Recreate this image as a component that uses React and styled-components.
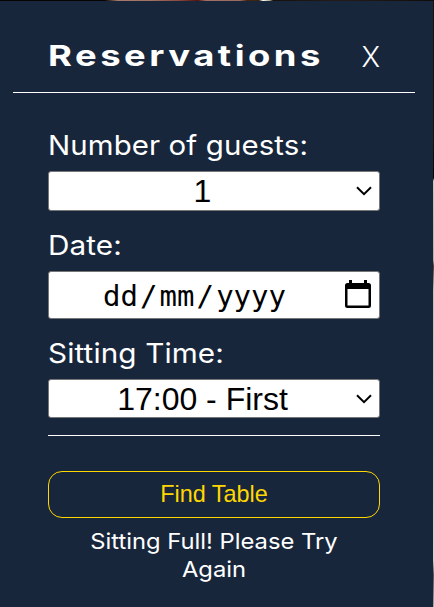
import React from "react";
import styled, { createGlobalStyle } from "styled-components";

const GlobalStyle = createGlobalStyle`
  * { box-sizing: border-box; }
  body { margin: 0; background: #0c0808; overflow: hidden; }
`;

const Backdrop = styled.main`
  width: 434px;
  height: 607px;
  padding: 1px 1px 0 0;
  background:
    linear-gradient(90deg, #080303 0 105px, #a8796a 118px, #a17365 150px, #8c4a40 178px, #54120f 198px, #a46f66 206px, #9a6b5e 240px, #472411 247px, #38240c 259px, #f4fff8 263px, #a99d89 270px, #15100e 273px, #241c1b 340px, #100b0b 434px) top / 434px 1px no-repeat,
    linear-gradient(180deg, #1b1110 0 140px, #080303 178px, #c8c4c2 181px, #b8b0ac 260px, #4e3c36 266px, #c4bfbd 290px, #d4d2d1 560px, #59545b 575px, #aaa7aa 607px) right / 1px 607px no-repeat;
`;

const Panel = styled.section`
  height: 606px;
  background: #18263c;
  color: #fff;
  font-family: Inter, sans-serif;
`;

const Header = styled.header`
  display: flex;
  justify-content: space-between;
  height: 92px;
  margin: 0 18px 0 13px;
  padding: 0 35px 0 36px;
  border-bottom: 1px solid #fff;
`;

const Title = styled.h1`
  margin: 0 0 0 -1px;
  padding-top: 35px;
  font: 700 29px/40px Inter, sans-serif;
  letter-spacing: 2.8px;
  white-space: nowrap;
  transform: scaleX(1.255);
  transform-origin: left;
`;

const Close = styled.button`
  margin: 0;
  padding: 20px 0 0;
  border: 0;
  background: none;
  color: #fff;
  font: 300 28px/40px Inter, sans-serif;
`;

const Form = styled.form`
  display: flex;
  flex-direction: column;
  width: 332px;
  height: 343px;
  margin-left: 48px;
  padding-top: 32px;
  border-bottom: 1px solid #fff;
`;

const Label = styled.label`
  height: 46px;
  font-size: 27.5px;
  line-height: 40px;
  letter-spacing: 0.1px;
  white-space: nowrap;
  transform: scaleX(${(p) => p.$stretch});
  transform-origin: left;
`;

const Control = styled.div`
  display: flex;
  align-items: center;
  height: ${(p) => p.$height}px;
  margin-bottom: ${(p) => p.$gap || 0}px;
  border: 1px solid #767676;
  border-radius: 3px;
  background: #fff;
  color: #000;
`;

const Value = styled.span`
  flex: 1;
  font: 32px/36px "Liberation Sans", Arial, sans-serif;
  text-align: center;
`;

const DateValue = styled.span`
  display: flex;
  flex: 1;
  gap: 2.1px;
  padding: 2px 0 0 54px;
  font: 29px/40px "DejaVu Sans Mono", monospace;
`;

const Chevron = styled.svg`
  width: 16px;
  height: 10px;
  margin-right: 7px;
`;

const CalendarIcon = styled.svg`
  width: 26px;
  height: 28px;
  margin: 0 8px 2px 0;
`;

const SubmitButton = styled.button`
  display: block;
  width: 332px;
  height: 47px;
  margin: 35px 0 0 48px;
  padding: 0 0 2px;
  border: 1px solid #ffd700;
  border-radius: 14px;
  background: none;
  color: #ffd700;
  font: 23.4px/42px "Liberation Sans", Arial, sans-serif;
`;

const Message = styled.p`
  width: 270px;
  margin: 9px 0 0 79px;
  font-size: 22px;
  line-height: 28px;
  text-align: center;
  transform: scaleX(1.08);
`;

function Arrow() {
  return (
    <Chevron viewBox="0 0 16 10" fill="none" stroke="#000" strokeWidth="2">
      <path d="M1 1.2 L8 8.2 L15 1.2" />
    </Chevron>
  );
}

function Calendar() {
  return (
    <CalendarIcon viewBox="0 0 26 28">
      <path d="M4 0H7V3H19V0H22V3H23.5Q26 3 26 5.5V25.5Q26 28 23.5 28H2.5Q0 28 0 25.5V5.5Q0 3 2.5 3H4ZM2.5 9V25.5H23.5V9Z" fillRule="evenodd" />
    </CalendarIcon>
  );
}

export default function App() {
  return (
    <Backdrop>
      <GlobalStyle />
      <Panel>
        <Header>
          <Title>Reservations</Title>
          <Close>X</Close>
        </Header>
        <Form>
          <Label $stretch={1.07}>Number of guests:</Label>
          <Control $height={40} $gap={14}>
            <Value>1</Value>
            <Arrow />
          </Control>
          <Label $stretch={1.08}>Date:</Label>
          <Control $height={48} $gap={14}>
            <DateValue>
              <span>dd</span><span>/</span><span>mm</span><span>/</span><span>yyyy</span>
            </DateValue>
            <Calendar />
          </Control>
          <Label $stretch={1.08}>Sitting Time:</Label>
          <Control $height={39}>
            <Value>17:00 - First</Value>
            <Arrow />
          </Control>
        </Form>
        <SubmitButton>Find Table</SubmitButton>
        <Message>Sitting Full! Please Try Again</Message>
      </Panel>
    </Backdrop>
  );
}
